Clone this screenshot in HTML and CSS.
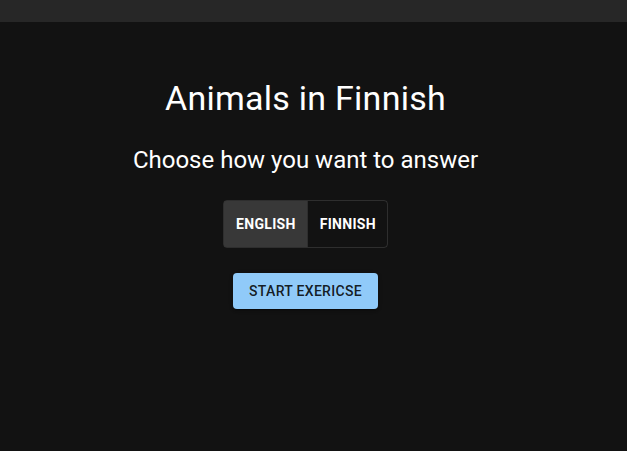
FILE: index.html
```html
<!DOCTYPE html>
<html lang="en">
<head>
<meta charset="utf-8">
<title>Animals in Finnish</title>
<link rel="stylesheet" href="styles.css">
</head>
<body>
<header class="topbar"></header>
<main class="content">
  <h1 class="title">Animals in Finnish</h1>
  <h2 class="subtitle">Choose how you want to answer</h2>
  <div class="toggle-group">
    <button class="toggle selected">English</button>
    <button class="toggle">Finnish</button>
  </div>
  <button class="start">Start exericse</button>
</main>
</body>
</html>
```
FILE: styles.css
```css
html, body {
  margin: 0;
  padding: 0;
  background: #121212;
  height: 100%;
  font-family: Roboto, "Noto Sans", sans-serif;
  color: #fff;
}
.topbar {
  height: 22px;
  background: #272727;
}
.content {
  width: 611px;
  display: flex;
  flex-direction: column;
  align-items: center;
  padding-top: 55px;
}
.title {
  margin: 0;
  font-size: 34px;
  font-weight: 400;
  line-height: 42px;
  letter-spacing: 0.25px;
}
.subtitle {
  margin: 25px 0 0;
  font-size: 24px;
  font-weight: 400;
  line-height: 32px;
}
.toggle-group {
  margin-top: 24px;
  display: flex;
  border: 1px solid rgba(255,255,255,0.12);
  border-radius: 4px;
  overflow: hidden;
}
.toggle {
  font-family: inherit;
  font-size: 14px;
  font-weight: 700;
  text-transform: uppercase;
  letter-spacing: 0.3px;
  color: #fff;
  background: transparent;
  border: 0;
  padding: 0 11px 0 12px;
  height: 46px;
  cursor: pointer;
}
.toggle + .toggle {
  border-left: 1px solid rgba(255,255,255,0.12);
}
.toggle.selected {
  background: rgba(255,255,255,0.16);
}
.start {
  margin-top: 25px;
  font-family: inherit;
  font-size: 14px;
  font-weight: 500;
  text-transform: uppercase;
  letter-spacing: 0.3px;
  color: rgba(0,0,0,0.87);
  background: #90caf9;
  border: 0;
  border-radius: 4px;
  height: 36px;
  padding: 0 16px;
  box-shadow: 0 3px 1px -2px rgba(0,0,0,0.2), 0 2px 2px 0 rgba(0,0,0,0.14), 0 1px 5px 0 rgba(0,0,0,0.12);
}
```
